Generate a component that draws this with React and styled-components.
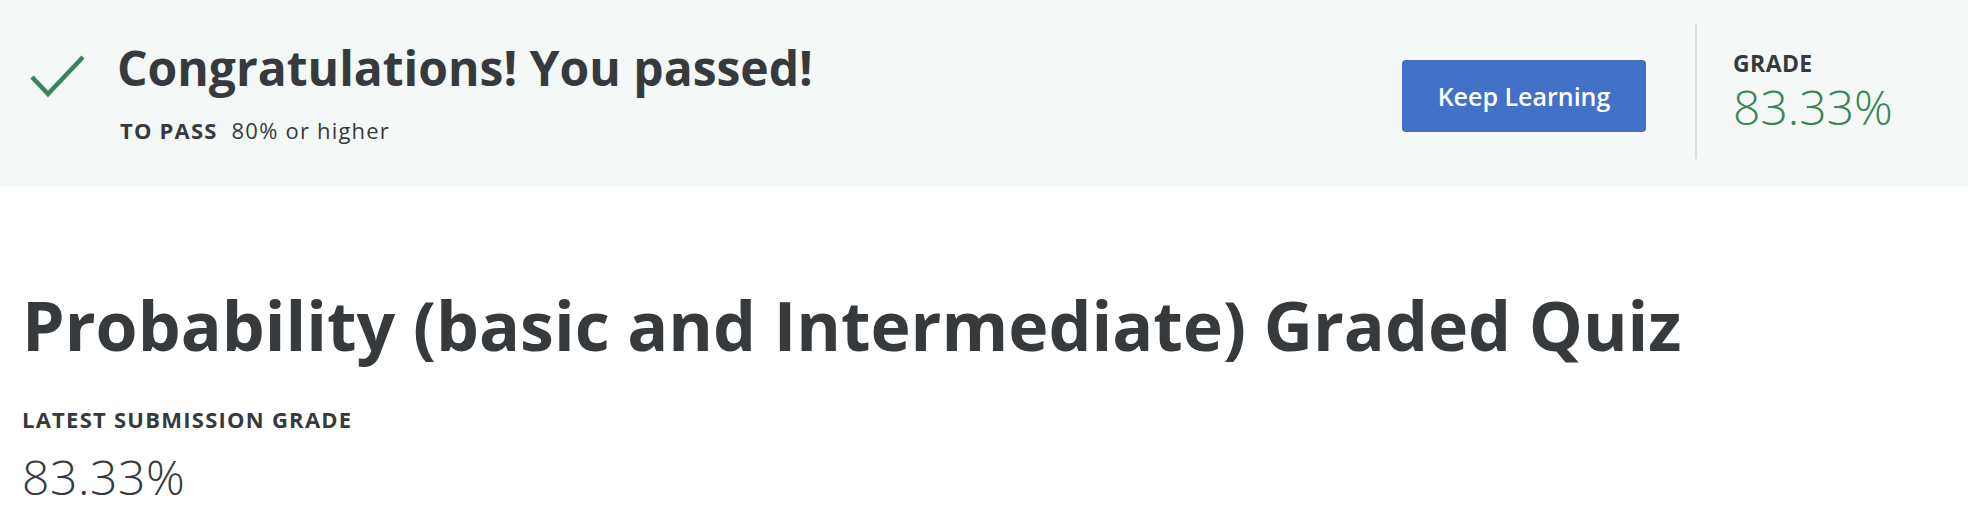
import React from 'react';
import styled, { createGlobalStyle } from 'styled-components';

const GlobalStyle = createGlobalStyle`
  body {
    margin: 0;
    background: #ffffff;
    font-family: "Open Sans", "Liberation Sans", sans-serif;
    color: #373a3c;
  }
`

const Container = styled.div`
  width: 1968px;
`

const Banner = styled.div`
  height: 187px;
  box-sizing: border-box;
  background-color: #f4f8f7;
  display: flex;
  align-items: flex-start;
  padding: 24px 0 0 30px;
`

const CheckIcon = styled.svg`
  width: 56px;
  height: 44px;
  margin-top: 30px;
  flex-shrink: 0;
`

const Message = styled.div`
  margin-top: 14px;
  margin-left: 31px;
  display: flex;
  flex-direction: column;
`

const Headline = styled.h2`
  margin: 0;
  font-size: 48px;
  line-height: 60px;
  font-weight: 700;
`

const PassRow = styled.div`
  margin-top: 18px;
  padding-left: 3px;
  font-size: 22px;
  line-height: 28px;
  letter-spacing: 1.2px;
  display: flex;
  gap: 14px;
`

const PassLabel = styled.span`
  font-weight: 700;
`

const PassValue = styled.span`
  font-weight: 400;
`

const Actions = styled.div`
  margin-left: auto;
  display: flex;
  align-items: flex-start;
`

const Button = styled.button`
  margin-top: 36px;
  margin-right: 49px;
  width: 244px;
  height: 72px;
  border: none;
  border-radius: 4px;
  background-color: #4172c7;
  color: #ffffff;
  font-family: inherit;
  font-size: 25px;
  font-weight: 600;
  cursor: pointer;
`

const GradeBox = styled.div`
  width: 273px;
  height: 135px;
  box-sizing: border-box;
  border-left: 2px solid #dcdfe0;
  padding: 24px 0 0 36px;
`

const Label = styled.div`
  font-size: ${props => props.size}px;
  line-height: ${props => props.lh}px;
  letter-spacing: ${props => props.spacing}px;
  font-weight: 700;
  text-transform: uppercase;
`

const Score = styled.div`
  font-size: ${props => props.size}px;
  line-height: 56px;
  letter-spacing: ${props => props.spacing}px;
  font-weight: 300;
  color: ${props => props.color};
  margin-top: ${props => props.gap}px;
`

const Content = styled.div`
  padding: 98px 22px 0;
`

const Title = styled.h1`
  margin: 0;
  font-size: 68px;
  line-height: 80px;
  font-weight: 700;
`

const SubmissionLabel = styled(Label)`
  margin-top: 40px;
`

const App = () => {
  return (
    <Container>
      <GlobalStyle/>
      <Banner>
        <CheckIcon viewBox="0 0 56 44">
          <polyline points="2,23 18,40 53,3" fill="none" stroke="#388557" strokeWidth="4.5"/>
        </CheckIcon>
        <Message>
          <Headline>Congratulations! You passed!</Headline>
          <PassRow>
            <PassLabel>TO PASS</PassLabel>
            <PassValue>80% or higher</PassValue>
          </PassRow>
        </Message>
        <Actions>
          <Button>Keep Learning</Button>
          <GradeBox>
            <Label size={23} lh={30} spacing={0.4}>Grade</Label>
            <Score size={48} spacing={0} color='#388557' gap={1}>83.33%</Score>
          </GradeBox>
        </Actions>
      </Banner>
      <Content>
        <Title>Probability (basic and Intermediate) Graded Quiz</Title>
        <SubmissionLabel size={22} lh={28} spacing={1.25}>Latest Submission Grade</SubmissionLabel>
        <Score size={48} spacing={0.6} color='#373a3c' gap={16}>83.33%</Score>
      </Content>
    </Container>
  )
}

export default App;
